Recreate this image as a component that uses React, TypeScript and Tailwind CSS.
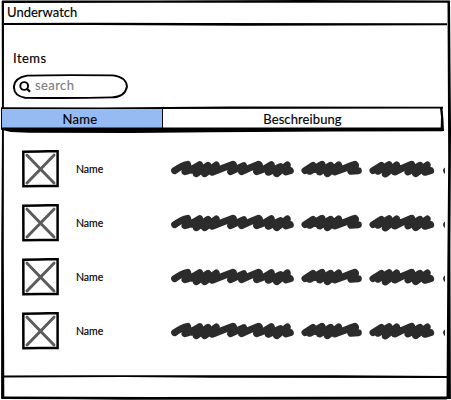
const items = ['Name', 'Name', 'Name', 'Name'];

function HLine({ d, className }: { d: string; className: string }) {
  return (
    <svg className={`block shrink-0 overflow-visible ${className}`} fill="black" aria-hidden="true">
      <path d={d} />
    </svg>
  );
}

function Picture() {
  return (
    <svg className="block h-[38px] w-[38px] shrink-0" viewBox="0 0 38 38" fill="none" aria-hidden="true">
      <path d="M1.3 1.7 L17 1.4 L35.6 1.1 L35.6 35.9 L18 36.1 L1.4 36.2 Z" stroke="#000" strokeWidth="2.5" />
      <path d="M5 5.2 L32 33 M32 5.2 L5 33" stroke="#5c5c5c" strokeWidth="3" strokeLinecap="round" />
    </svg>
  );
}

function Scribble() {
  return (
    <svg className="relative top-px block h-10 w-[285px] shrink-0" viewBox="0 0 855 120" fill="none" stroke="#2b2b2b" strokeWidth="21" strokeLinecap="round" strokeLinejoin="round" aria-hidden="true">
      <path d="M44 62 Q66 46 83 43 Q87 48 75 65 Q90 62 119 44 L109 71 L144 46 L134 71 L169 45 L157 67 Q190 54 219 43 Q224 46 212 65 Q229 57 251 47 L245 65 Q268 54 296 43 Q303 47 290 65 Q310 60 334 44 L325 67 L361 50 L350 71 L382 45 L378 66 L391 62 M98 61 L160 59 M326 60 L380 60" />
      <path d="M435 62 L459 46 L449 64 L486 43 L479 66 L512 46 L502 71 L536 45 L524 66 Q560 52 585 43 Q591 48 573 64 L595 62 M450 58 L530 59" />
      <path d="M639 62 L664 46 L654 64 L687 44 L676 72 L710 45 L704 66 Q730 53 755 43 L744 66 L780 46 L767 71 L802 45 L795 67 L812 62 M655 58 L720 56 M744 59 L798 59" />
      <path d="M860 62 L870 58" />
    </svg>
  );
}

export default function App() {
  return (
    <div className="flex h-[400px] w-[451px] overflow-hidden bg-white font-['Lato',sans-serif] text-black">
      <HLine className="h-[400px] w-[4px]" d="M1.7 1 L4 1 L3.9 130 L3.8 250 L4.3 398 L1.1 399 L1.2 250 L2 130 Z" />
      <main className="flex h-[400px] w-[443px] shrink-0 flex-col">
        <HLine className="h-[3px] w-[443px]" d="M-2 .4 L150 .6 L300 0 L446 .6 L446 2.8 L150 2.7 L-2 3 Z" />
        <header className="flex h-5 items-center pl-[3px] text-[13px] tracking-[0.02px] [-webkit-text-stroke:0.15px_black]">Underwatch</header>
        <HLine className="h-[3px] w-[443px]" d="M-2 0 L90 -.3 L190 0 L443 .2 L443 2.2 L240 2.8 L90 2 L-2 2 Z" />
        <h1 className="mt-[22px] h-5 pl-[9px] text-[13px] leading-5 tracking-[0.45px] [-webkit-text-stroke:0.15px_black]">Items</h1>
        <div className="relative mt-[6px] ml-[9px] flex h-[25px] w-[115px] items-center">
          <svg className="absolute inset-0 h-[25px] w-[115px]" viewBox="0 0 115 25" fill="none" aria-hidden="true">
            <path d="M14 1.6 Q48 .7 100 1.4 Q113 3 114 12.5 Q112 23 99 23.4 Q58 24.4 12 23.7 Q1 22 .9 13 Q1 4 14 1.6 Z" stroke="#000" strokeWidth="1.9" />
            <circle cx="11.2" cy="12" r="3.9" stroke="#000" strokeWidth="1.9" />
            <path d="M14 14.7 L17 17.7" stroke="#000" strokeWidth="2.3" />
          </svg>
          <span className="relative -top-px pl-[22px] text-[13px] tracking-[0.4px] text-[#808080] [-webkit-text-stroke:0.15px_#808080]">search</span>
        </div>
        <section className="-ml-[3px] mt-[8px] flex h-[26px] w-[444px] shrink-0 flex-col">
          <HLine className="h-[2px] w-[442px]" d="M0 .3 L100 .4 L230 -.4 L442 -.2 L442 1.6 L0 2.2 Z" />
          <div className="flex h-[19px] [-webkit-text-stroke:0.15px_black]">
            <div className="flex w-[162px] items-center justify-center border-x border-black bg-[#95bbf2] pr-1 pt-[2px] text-[13px] tracking-[0.35px]">Name</div>
            <div className="flex w-[279px] items-center justify-center pt-[2px] text-[13px] tracking-[0.1px]">Beschreibung</div>
            <HLine className="h-[22px] w-[3px]" d="M-2 -1 L.5 -1 L1.4 10 L2 22 L-1.4 22 L-1 8 Z" />
          </div>
          <HLine className="h-[5px] w-[443px]" d="M0 -.6 L130 -.4 L442 -.6 L442 3.2 L330 3.6 L210 4.2 L130 4.9 L28 4.8 L10 4 L0 1.8 Z" />
        </section>
        <ul className="mt-[9px] flex h-[216px] shrink-0 flex-col">
          {items.map((name, i) => (
            <li key={i} className="flex h-[54px] shrink-0 items-center pl-[18px]">
              <Picture />
              <span className="w-[100px] shrink-0 pl-4 text-[10.5px] leading-[14px] [-webkit-text-stroke:0.15px_black]">{name}</span>
              <Scribble />
            </li>
          ))}
        </ul>
        <div className="mt-auto flex h-[25px] shrink-0 flex-col justify-between">
          <HLine className="h-[3px] w-[443px]" d="M-2 .4 L85 .2 L330 .3 L443 1.1 L443 3 L210 2.7 L120 1.9 L-2 2.5 Z" />
          <HLine className="h-[4px] w-[443px]" d="M-2 .6 L150 1 L443 .6 L443 3.4 L120 3.8 L70 3.2 L-2 3 Z" />
        </div>
      </main>
      <HLine className="h-[400px] w-[4px]" d="M.5 1 L3 1 L4 130 L3.4 250 L3.9 399 L-.5 399 L.3 270 L1.2 160 Z" />
    </div>
  );
}
